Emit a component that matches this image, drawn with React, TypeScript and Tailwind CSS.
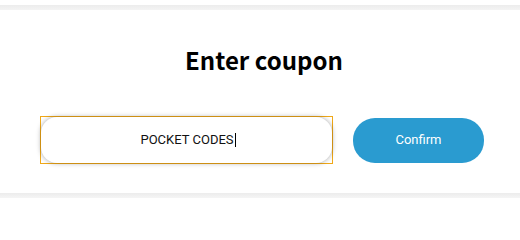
export default function App() {
  return (
    <div className="min-h-[225px] w-full bg-white pt-[5px]">
      {/* Top band */}
      <div className="h-[5px] bg-gradient-to-b from-[#ececec] to-[#f4f4f4]" />

      {/* Coupon card */}
      <div className="flex h-[183px] flex-col items-center bg-white">
        <h1 className="mt-[34px] pl-[8px] font-['Noto_Sans_CJK_SC',sans-serif] text-[24px] font-bold leading-[32px] text-black">
          Enter coupon
        </h1>

        <div className="mt-[40px] flex w-full items-center pl-[40px]">
          <div className="border border-[#f0a818]">
            <div className="flex h-[46px] w-[291px] items-center justify-center rounded-[16px] bg-white pl-[3px] font-['Roboto',sans-serif] text-[13px] text-[#111] shadow-[0_0_5px_rgba(0,0,0,0.35)]">
              POCKET CODES
              <span className="ml-px h-[14px] w-px bg-black" />
            </div>
          </div>
          <button className="ml-[20px] h-[45px] w-[131px] rounded-[22px] bg-[#2a9bd0] font-['Roboto',sans-serif] text-[13px] text-white">
            Confirm
          </button>
        </div>
      </div>

      {/* Bottom band */}
      <div className="h-[5px] bg-gradient-to-b from-[#ececec] to-[#f5f5f5]" />
    </div>
  );
}
